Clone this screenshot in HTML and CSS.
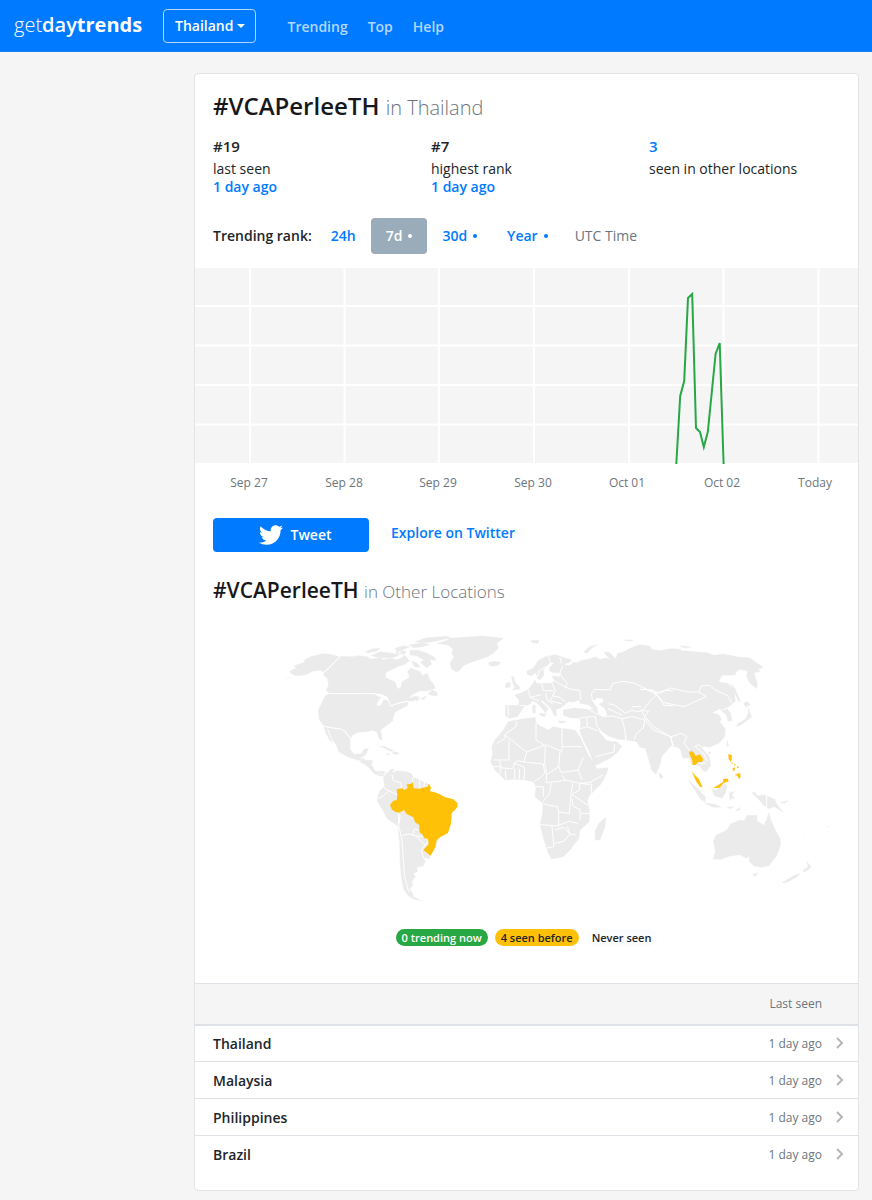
FILE: index.html
```html
<!DOCTYPE html>
<html lang="en">
<head>
<meta charset="utf-8">
<meta name="viewport" content="width=device-width, initial-scale=1">
<title>#VCAPerleeTH in Thailand - getdaytrends</title>
<link rel="stylesheet" href="styles.css">
</head>
<body>
<header class="navbar">
  <a class="brand" href="#"><span class="brand-thin">get</span><span class="brand-mid">day</span><span class="brand-bold">trends</span></a>
  <button class="location" type="button">Thailand<span class="caret"></span></button>
  <nav class="links">
    <a href="#">Trending</a>
    <a href="#">Top</a>
    <a href="#">Help</a>
  </nav>
</header>
<div class="page">
<main class="card">
  <section class="summary">
    <h1 class="title">#VCAPerleeTH <small class="where">in Thailand</small></h1>
    <div class="stats">
      <div class="stat"><strong class="num">#19</strong><span>last seen</span><a href="#">1 day ago</a></div>
      <div class="stat"><strong class="num">#7</strong><span>highest rank</span><a href="#">1 day ago</a></div>
      <div class="stat"><a class="num" href="#">3</a><span>seen in other locations</span></div>
    </div>
    <div class="ranges">
      <span class="ranges-label">Trending rank:</span>
      <a class="range" href="#">24h</a>
      <a class="range active" href="#">7d <i class="dot"></i></a>
      <a class="range" href="#">30d <i class="dot"></i></a>
      <a class="range" href="#">Year <i class="dot"></i></a>
      <span class="utc">UTC Time</span>
    </div>
  </section>

  <svg class="chart" viewBox="195 268 663 230" role="img" aria-label="Trending rank over 7 days">
    <rect x="195" y="268" width="663" height="195" fill="#f5f5f5"/>
    <path class="grid" d="M195 306H858M195 345.500H858M195 385H858M195 424.500H858M250 268V463M344.500 268V463M439 268V463M534 268V463M629 268V463M723.500 268V463M818.500 268V463"/>
    <path class="series" d="M676.300 464L680.200 396 684.200 381 688 298 692.200 294 696 428 700 432 703.800 447 707.800 432 715.600 354 719.700 343 723.600 464"/>
    <g class="ticks">
      <text x="249" y="487">Sep 27</text><text x="344" y="487">Sep 28</text><text x="438" y="487">Sep 29</text><text x="533" y="487">Sep 30</text><text x="627" y="487">Oct 01</text><text x="722" y="487">Oct 02</text><text x="815" y="487">Today</text>
    </g>
  </svg>

  <section class="share">
    <a class="tweet" href="#"><svg class="bird" viewBox="0 0 24 24" aria-hidden="true"><path fill="#fff" d="M23.954 4.569c-.885.389-1.83.654-2.825.775 1.014-.611 1.794-1.574 2.163-2.723-.951.555-2.005.959-3.127 1.184-.896-.959-2.173-1.559-3.591-1.559-2.717 0-4.92 2.203-4.92 4.917 0 .39.045.765.127 1.124C7.691 8.094 4.066 6.13 1.64 3.161c-.427.722-.666 1.561-.666 2.475 0 1.71.87 3.213 2.188 4.096-.807-.026-1.566-.248-2.228-.616v.061c0 2.385 1.693 4.374 3.946 4.827-.413.111-.849.171-1.296.171-.314 0-.615-.03-.916-.086.631 1.953 2.445 3.377 4.604 3.417-1.68 1.319-3.809 2.105-6.102 2.105-.39 0-.779-.023-1.17-.067 2.189 1.394 4.768 2.209 7.557 2.209 9.054 0 13.999-7.496 13.999-13.986 0-.209 0-.42-.015-.63.961-.689 1.8-1.56 2.46-2.548z"/></svg>Tweet</a>
    <a class="explore" href="#">Explore on Twitter</a>
  </section>

  <section class="places">
    <h2 class="subtitle">#VCAPerleeTH <small class="where">in Other Locations</small></h2>
    <svg class="map" viewBox="213 620 627 294" role="img" aria-label="World map of locations">
      <!-- North America -->
      <g transform="translate(280 625) scale(.33333)">
        <path class="land" d="M28 140L50 128 42 122 75 112 72 106 95 94 130 86 150 88 178 95 132 140 120 136 100 138 80 148 60 152 40 150Z"/>
        <path class="islands" d="M5 164L20 159 35 155 28 159ZM42 154L56 151 50 155Z"/>
        <path class="land" d="M182 94L215 95 235 92 262 95 272 102 300 98 310 104 330 100 352 104 368 96 372 90 380 96 388 108 375 118 355 124 340 132 318 142 316 157 330 164 345 170 352 192 362 188 366 170 386 160 388 150 382 140 392 130 405 134 420 140 428 152 442 144 450 165 462 180 466 190 440 198 420 197 395 210 385 220 405 214 418 216 400 228 385 228 365 230 345 236 330 242 328 230 318 214 300 208 285 206 150 205 138 195 146 182 142 160 130 150 135 140Z"/>
        <path class="land" d="M145 207H282L296 214 308 212 318 218 300 222 290 235 300 238 310 222 326 228 332 242 350 236 385 230 382 242 362 252 345 262 340 275 338 288 322 300 302 315 306 345 298 342 290 320 275 316 262 320 235 322 218 330 212 340 195 318 182 312 160 308 132 302 118 285 115 255 125 235 135 214Z"/>
        <path class="land" d="M131 304L158 310 182 312 195 322 211 342 210 372 222 388 244 386 252 372 266 370 258 388 244 398 236 406 205 396 176 380 170 362 158 345 146 315 140 312 148 330 157 352 150 347 138 325Z"/>
        <path class="land" d="M238 404L250 400 256 406 278 406 274 420 280 434 292 440 308 438 318 444 300 446 284 446 268 430 256 418 240 408ZM298 364L312 364 342 378 328 378 312 368ZM340 380L358 384 350 389 338 385ZM320 386h8v3h-8z"/>
        <path class="border" d="M134 142L180 96M150 206H284L300 210 320 216 328 232 332 244 346 238 366 232 386 228M132 304L160 309 182 312 196 320 212 342"/>
        <path class="water" d="M288 208L304 207 318 215 322 226 312 222 304 238 296 244 290 240 298 222 306 216 292 214Z"/>
        <path class="land" d="M470 55L495 48 510 40 560 36 610 33 670 40 650 55 655 68 640 85 622 95 600 103 568 114 550 122 540 135 530 141 515 132 510 115 522 96 515 84 520 74 505 60ZM628 112L645 109 662 112 656 120 640 124 630 120Z"/>
        <path class="land" d="M256 80L275 72 300 70 290 78 265 84ZM272 92L300 80 330 84 358 90 338 98 300 98ZM345 70L372 62 388 66 370 74 352 80ZM388 60L420 54 450 58 425 66 400 68ZM405 50L440 38 500 34 512 38 470 48 430 54ZM390 76L415 76 440 84 462 96 468 106 450 104 455 118 440 128 420 112 432 106 410 92 390 90ZM395 108L412 114 420 126 404 126ZM444 206L456 194 470 202 472 212 456 212ZM422 222L440 212 432 224ZM362 78h16l-4 10h-12zM405 222l14-3-8 10zM345 84l10-6 4 10z"/>
        <path class="land" d="M676 184L684 174 690 172V186Z"/>
      </g>
      <!-- South America -->
      <g transform="translate(360 760) scale(.33333)">
        <path class="land" d="M0 5L14 2 40 22 42 34 60 44 72 40 70 48 58 48 42 40 26 20 12 12Z"/>
        <path class="land" d="M70 52L78 42 96 26 102 28 96 40 110 32 140 35 155 42 160 52 180 60 204 72 212 95 250 110 250 200 226 262 212 280 208 296 188 292 196 304 190 318 170 322 172 335 160 340 166 350 156 362 158 376 148 388 158 400 160 410 184 422 162 418 142 404 130 385 124 350 120 300 119 250 114 198 82 176 68 150 52 124 52 112 60 92 74 80Z"/>
        <path class="border" d="M72 84L86 92 98 98 112 104M54 116L70 108 86 92M96 44L100 62 122 68 124 86M160 50L156 70M178 60L180 86M194 64L192 82M116 154L116 196 126 240 130 300 134 350 146 396M120 164L118 190M128 226L150 222 168 228 190 230M162 206L182 214M158 228L162 210M168 228L196 256 184 270 190 294M206 240L196 256"/>
        <path class="seen" d="M110 88L128 85 132 90 143 85 140 73 152 72 158 66 161 85 178 86 195 82 203 80 206 71 213 82 210 94 222 96 240 103 252 110 280 118 293 130 292 142 275 160 274 178 272 195 264 219 240 232 230 240 226 262 212 287 190 270 206 253 204 237 192 234 188 224 178 216 178 195 165 187 160 172 140 162 132 150 118 158 105 155 95 148 90 135 100 122 110 120 112 104Z"/>
      </g>
      <!-- Europe, Africa and western Asia -->
      <g transform="translate(480 640) scale(.33333)">
        <path class="land" d="M240 95L248 75 272 76 280 66 292 68 302 62 330 56 345 50 360 58 378 54 392 60 372 38 384 36 396 44 408 58 412 40 430 36 450 25 478 14 510 18 515 28 540 32 570 26 602 28 602 325 585 320 572 318 545 350 540 375 528 403 515 390 505 355 496 325 480 322 470 305 440 300 415 298 385 288 360 270 352 262 358 276 378 300 395 305 408 304 425 318 415 335 395 352 350 375 342 370 328 335 310 300 300 275 302 250 300 234 270 234 250 225 250 210 285 204 320 208 342 208 325 195 300 190 298 180 280 186 265 185 252 196 240 205 228 208 230 230 222 225 212 205 196 190 186 180 182 184 205 205 196 220 188 206 172 190 158 182 150 192 132 200 122 215 112 230 90 235 76 228 76 196 115 196 118 180 104 166 125 158 146 148 160 128 164 120 170 130 215 130 224 122 216 108 240 110Z"/>
        <path class="land" d="M140 94L160 84 175 62 195 50 225 44 245 50 275 60 268 68 256 70 250 90 240 98 220 98 208 92 208 82 222 70 212 66 198 80 190 90 192 105 180 120 172 115 168 98 152 108 142 102ZM94 108L102 112 105 126 120 142 118 148 98 150 104 140 98 128ZM78 130L88 125 92 134 86 143 76 142ZM312 36L328 20 352 14 332 26 322 40ZM26 68L44 66 60 70 42 78 28 76ZM152 2L178 0 174 10 158 8ZM430 0L460 0 450 4ZM540 400L548 408 546 416 540 410Z"/>
        <path class="water" d="M338 184L352 174 368 176 370 186 356 192 374 206 382 226 366 230 354 218 352 204Z"/>
        <path class="land" d="M178 220L198 222 194 230 180 226ZM158 196h8v22h-8zM236 242l22 2-4 4h-16z"/>
        <path class="land" d="M85 245L110 240 165 232 168 248 180 258 205 270 218 260 245 265 285 270 300 290 325 345 345 372 350 386 385 383 380 400 365 430 330 465 322 480 328 510 328 545 300 570 297 595 270 630 250 650 215 657 205 640 192 600 180 555 188 520 188 490 165 470 168 440 160 425 135 420 100 418 75 420 45 390 32 365 38 340 35 320 45 300 70 270ZM378 532L375 560 360 600 346 600 345 575 358 548Z"/>
        <path class="border" d="M75 285L140 336 194 316 168 300 168 248M110 244L108 260 76 282 74 296 50 310M87 300V360H40M246 264V320H306M246 320V334L196 314M240 334L236 380 200 404 194 368 196 318M140 336L132 366 190 372 194 400 180 414 162 424M100 372L112 362 132 366M58 362L64 384 98 386 104 370 134 382 132 420M76 392L78 418M104 386V418M118 386V418M40 380H62L60 404M200 404L198 428 236 424 256 420 300 430 328 428 370 404M236 380L244 398 294 390 310 352M294 390L306 420M246 404L256 422M278 430L272 470 268 520 236 516 232 500 206 496 188 490M214 430L208 462 188 486M300 430L298 450 276 464M300 430L330 434M334 430V464M276 464L324 496M276 476L280 500 300 508 300 540M302 520L328 520M236 516V558L180 554M236 556L266 544 294 550M216 560L222 620 200 624M224 570L252 562 270 582 252 604 224 610M262 560L270 582 288 584M168 440H190V470"/>
        <path class="border" d="M248 78L240 100 248 114 262 130 256 142 276 148 300 152 302 178M216 130L226 152 218 168 240 172 256 186M224 122L256 142M185 130L190 152 220 152M146 150L150 172 184 164M118 196L140 198M84 196L86 228M150 172L176 182M196 160L204 184 218 190M218 170L210 182 246 192M198 80L178 92 172 110M206 48L210 66M240 52L244 70M338 184L334 162 344 148 390 150 398 130 430 124 464 130 496 146 530 164 552 196 602 198M496 146L528 160 556 150 602 156M530 164L508 186 486 214 500 246 520 270 572 290 602 288M386 192L402 194 436 220 456 210 470 216 486 212M366 230L400 228 426 236 434 268 438 300M426 236L456 230 480 236 494 240 490 264 470 280 462 300M384 206L426 226M300 234L330 230 346 230 350 256 362 272M302 266L322 260 352 272M320 234L322 260M346 350L402 336 404 312M322 206L346 220 364 226M456 200L484 200M572 290L580 318"/>
      </g>
      <!-- East Asia and Oceania -->
      <g transform="translate(640 630) scale(.33333)">
        <path class="land" d="M100 56L120 62 150 64 200 68 222 76 250 72 290 80 330 84 345 95 370 112 355 118 360 125 342 128 352 160 350 176 332 162 320 142 322 122 300 118 290 124 285 135 245 136 236 156 262 160 282 178 286 214 268 228 262 238 272 250 276 272 264 274 260 256 246 244 240 236 216 248 236 254 244 266 240 276 256 296 254 320 236 340 208 352 190 348 188 358 208 380 212 405 200 425 190 424 178 408 164 402 156 404 148 384 128 384 122 360 114 350 100 340Z"/>
        <path class="land" d="M272 160L286 178 302 215 296 214 284 190ZM310 222L320 214 332 224 318 230ZM326 234L334 262 304 284 290 290 292 282 318 266 324 250ZM262 332L266 346 260 350ZM204 366l8 0-4 8zM58 428L68 440 64 446 58 440ZM118 48l36 3-20 3z"/>
        <path class="land" d="M145 450L165 468 196 500 196 516 182 508 160 474ZM194 520L222 522 244 532 220 532ZM216 480L232 478 244 472 252 460 262 466 256 490 246 504 224 498ZM268 488L284 484 276 494 284 508 276 504 270 512ZM334 487L346 488 352 498 372 494 404 508 412 526 430 546 402 530 384 536 370 524 356 508ZM420 518L444 512 434 520ZM262 532l20-2-10 6zM288 540l14-8-6 10z"/>
        <path class="land" d="M228 616L260 600 272 582 300 570 312 572 322 556 352 556 350 572 372 586 380 570 386 548 394 572 404 596 420 625 422 645 408 680 388 706 364 712 342 708 328 695 328 680 316 684 300 674 270 678 244 688 220 688 226 664 220 634ZM338 732L354 730 344 740ZM500 694L514 712 494 726 488 722 504 710ZM426 758L460 738 480 730 470 742 438 758Z"/>
        <path class="islands" d="M490 604l6 8-6-4zM560 588h6v4h-6z"/>
        <path class="border" d="M0 178L36 180 60 190 92 174 142 186 176 186 184 168 208 166 230 182 262 196 276 220M42 184L72 218 132 230 172 212 198 200 176 186M0 240L26 244 14 258 40 290 92 320 124 310 140 320 132 340 148 360M92 320L98 348M160 352L176 344 192 358M168 352L192 372 202 396M180 400L198 400M380 496V534M268 232L248 240"/>
        <path class="seen" d="M147 368L154 362 162 368 166 378 180 373 190 388 186 396 174 396 168 404 158 406 157 392 152 380ZM155 423L164 434 176 446 188 472 180 470 168 454ZM219 475L236 464 249 456 250 446 264 446 266 454 250 460 240 473ZM265 372L276 376 275 388 272 396 266 388ZM272 396l8 5-4 2zM282 402l7 2-5 3zM278 414l6-2 1 8-6 4zM290 408l8 4-6 3zM268 422l4-4-8 12zM282 436L300 428 302 440 298 448 290 436Z"/>
      </g>
    </svg>
    <div class="legend">
      <span class="badge now">0 trending now</span>
      <span class="badge before">4 seen before</span>
      <span class="badge never">Never seen</span>
    </div>
  </section>

  <table class="locations">
    <thead><tr><th></th><th class="when">Last seen</th><th class="go"></th></tr></thead>
    <tbody>
      <tr><td><a href="#">Thailand</a></td><td class="when">1 day ago</td><td class="go"><svg class="chevron" viewBox="0 0 8 12"><path d="M1 1L6 6 1 11"/></svg></td></tr>
      <tr><td><a href="#">Malaysia</a></td><td class="when">1 day ago</td><td class="go"><svg class="chevron" viewBox="0 0 8 12"><path d="M1 1L6 6 1 11"/></svg></td></tr>
      <tr><td><a href="#">Philippines</a></td><td class="when">1 day ago</td><td class="go"><svg class="chevron" viewBox="0 0 8 12"><path d="M1 1L6 6 1 11"/></svg></td></tr>
      <tr><td><a href="#">Brazil</a></td><td class="when">1 day ago</td><td class="go"><svg class="chevron" viewBox="0 0 8 12"><path d="M1 1L6 6 1 11"/></svg></td></tr>
    </tbody>
  </table>
</main>
</div>
</body>
</html>
```
FILE: styles.css
```css
* { box-sizing: border-box; }
body { margin: 0; background: #f5f5f5; color: #212529; font: 14px/18px "Open Sans", "Noto Sans", sans-serif; }
a { color: #007bff; text-decoration: none; }
h1, h2 { margin: 0; color: #16181b; font-weight: 600; }

.navbar { display: flex; align-items: center; height: 52px; padding: 0 14px; background: #007bff; border-bottom: 1px solid #1a7fee; }
.brand { width: 149px; color: #fff; font-size: 20px; line-height: 28px; padding-bottom: 2px; }
.brand-thin { font-weight: 300; }
.brand-mid { font-weight: 600; }
.brand-bold { font-weight: 700; }
.location { display: flex; align-items: center; gap: 4px; height: 34px; padding: 0 10px 0 11px; border: 1px solid #b3d7ff; border-radius: 4px; background: none; color: #fff; font: 600 14px/18px "Open Sans", "Noto Sans", sans-serif; }
.caret { border: 4px solid transparent; border-top-color: #fff; border-bottom: 0; }
.links { display: flex; gap: 20px; margin-left: 31px; padding-top: 2px; font-weight: 600; }
.links a { color: #b3d7ff; }

.page { padding: 21px 13px 9px 194px; }
.card { overflow: hidden; background: #fff; border: 1px solid #e3e4e5; border-radius: 4px; padding-bottom: 17px; }
.summary { padding: 16px 18px 14px; }
.title { font-size: 24px; line-height: 32px; }
.where { color: #6c757d; font-weight: 300; }
.title .where { font-size: 20px; }
.stats { display: grid; grid-template-columns: 218px 218px 1fr; margin-top: 13px; }
.stat { display: flex; flex-direction: column; }
.stat a { font-weight: 600; }
.stat .num { font-size: 15px; line-height: 18px; font-weight: 600; margin-bottom: 5px; }
.ranges { display: flex; align-items: center; margin-top: 22px; font-weight: 600; }
.ranges-label { margin-right: 4px; }
.range { display: flex; align-items: center; gap: 6px; height: 36px; padding: 0 15px; border-radius: 4px; }
.range.active { background: #9aabba; color: #fff; }
.dot { width: 4px; height: 4px; border-radius: 50%; background: currentColor; }
.utc { margin-left: 12px; color: #6c757d; font-weight: 400; }

.chart { display: block; width: 100%; height: auto; }
.grid { stroke: #fff; stroke-width: 2; fill: none; }
.series { stroke: #28a745; stroke-width: 2; fill: none; }
.ticks { fill: #6c757d; font-size: 12px; text-anchor: middle; }

.share { display: flex; align-items: center; gap: 22px; padding: 20px 18px 0; }
.tweet { display: flex; align-items: center; justify-content: center; gap: 8px; width: 156px; height: 34px; padding-left: 8px; border-radius: 4px; background: #007bff; color: #fff; font-weight: 600; }
.bird { width: 24px; height: 24px; }
.explore { font-weight: 600; padding-bottom: 4px; }

.places { padding: 24px 18px 37px; }
.subtitle { font-size: 21px; line-height: 28px; }
.subtitle .where { font-size: 17px; }
.map { display: block; width: 100%; height: auto; margin-top: 14px; }
.land { fill: #ebebeb; stroke: #ebebeb; stroke-width: 1; stroke-linejoin: round; }
.islands { fill: #f4f4f4; }
.border { fill: none; stroke: #fff; stroke-width: 3; stroke-linejoin: round; }
.water { fill: #fff; }
.seen { fill: #ffc107; }
.legend { display: flex; justify-content: center; gap: 7px; margin-top: 15px; font-size: 11px; line-height: 17px; font-weight: 600; }
.badge { padding: 0 6px; border-radius: 9px; }
.now { background: #28a745; color: #fff; }
.before { background: #ffc107; }
.never { background: #fbfcfd; }

.locations { width: 100%; border-collapse: collapse; }
.locations th { height: 41px; background: #f5f5f5; border-top: 1px solid #dee2e6; border-bottom: 2px solid #dee2e6; padding: 0; }
.locations td { height: 37px; border-top: 1px solid #dee2e6; padding: 2px 0 0 18px; }
.locations td a { color: #212529; font-weight: 600; }
.locations .when { color: #6c757d; font-size: 12px; font-weight: 400; text-align: right; }
.locations .go { width: 36px; padding: 0 0 0 14px; }
.chevron { display: block; width: 8px; height: 12px; fill: none; stroke: #b4b7ba; stroke-width: 2; }
```
